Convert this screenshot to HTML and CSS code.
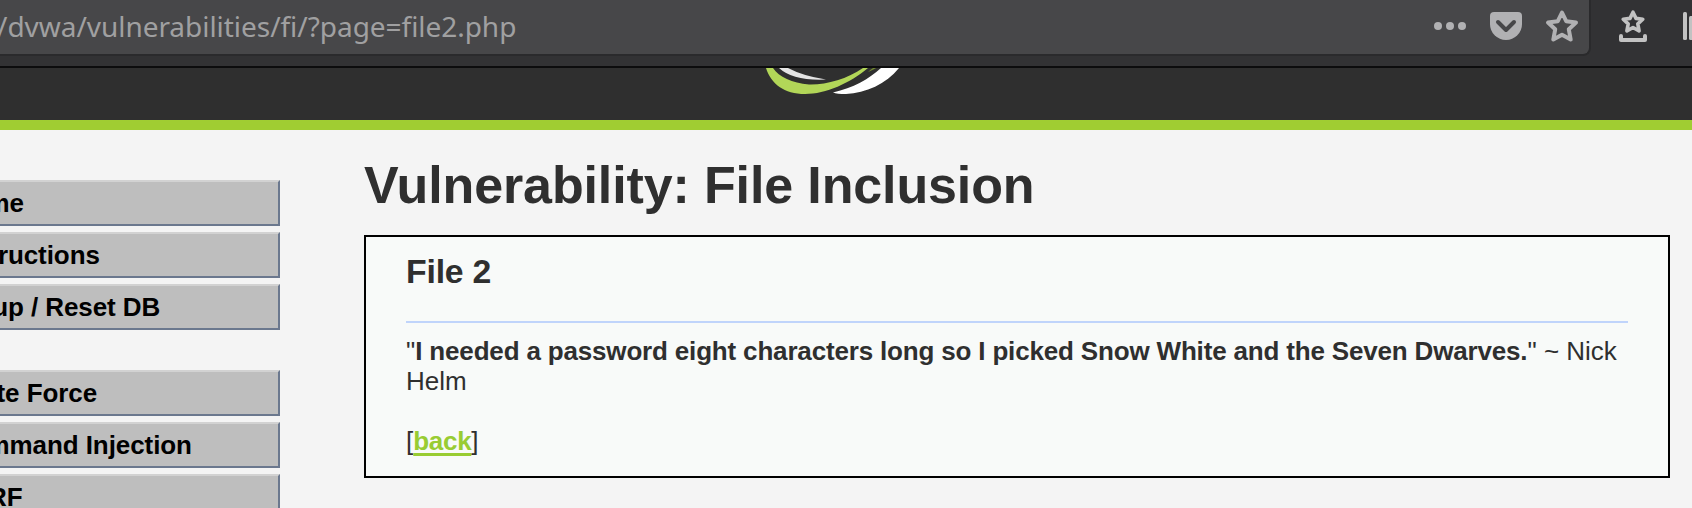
FILE: index.html
```html
<!DOCTYPE html>
<html lang="en">
<head>
<meta charset="utf-8">
<title>Vulnerability: File Inclusion</title>
<link rel="stylesheet" href="styles.css">
</head>
<body>
<div class="toolbar">
  <div class="urlbar">
    <span class="url">/dvwa/vulnerabilities/fi/?page=file2.php</span>
    <svg class="url-icons" width="152" height="54" viewBox="1430 0 152 54">
      <g fill="#b1b1b3"><circle cx="1437" cy="26" r="4"/><circle cx="1449" cy="26" r="4"/><circle cx="1461" cy="26" r="4"/>
      <path d="M1493 12h24q4 0 4 4v8a16 16 0 0 1-32 0v-8q0-4 4-4z"/></g>
      <path d="M1497 22l8 8 8-8" fill="none" stroke="#474749" stroke-width="4" stroke-linecap="round" stroke-linejoin="round"/>
      <path d="M1561 12.5l4.2 8.7 9.8 1.3-7.2 6.8 1.9 10.2-8.7-4.8-8.7 4.8 1.9-10.2-7.2-6.8 9.8-1.3z" fill="none" stroke="#b1b1b3" stroke-width="4" stroke-linejoin="round"/>
    </svg>
  </div>
  <svg class="tool-icons" width="101" height="66" viewBox="1591 0 101 66">
    <path d="M1633 12.2l3 6.2 6.8.9-5 4.6 1.3 7-6.1-3.4-6.1 3.4 1.3-7-5-4.6 6.8-.9z" fill="none" stroke="#c2c2c2" stroke-width="3.6" stroke-linejoin="round"/>
    <path d="M1621 36v4h24v-4" fill="none" stroke="#c2c2c2" stroke-width="4" stroke-linecap="round" stroke-linejoin="round"/>
    <rect x="1683" y="12" width="4" height="28" rx="1.5" fill="#c2c2c2"/><rect x="1689" y="16" width="4" height="24" rx="1.5" fill="#c2c2c2"/>
  </svg>
</div>
<header class="header">
  <svg class="logo" width="150" height="28" viewBox="760 68 150 28">
    <path d="M766 68C771 84 784 94 805 94C826 94 850 83 868 68L863 68C847 79 826 85 809 84.500C792 83 779 77 773 68Z" fill="#b2d658"/>
    <path d="M868 72Q873 70 877 67.500L874 67.500Q871 69 868 72Z" fill="#71882f"/>
    <path d="M779 68Q793 81 826 79.500Q803 76 788 68Z" fill="#e4e4e4"/>
    <path d="M881 68C869 79 853 88 833 92.500Q837 94 846 94C866 93 886 84 899 68Z" fill="#fff"/>
  </svg>
</header>
<div class="page">
  <nav class="menu">
    <ul class="group"><li>Home</li><li>Instructions</li><li>Setup / Reset DB</li></ul>
    <ul class="group"><li>Brute Force</li><li>Command Injection</li><li>CSRF</li></ul>
  </nav>
  <main class="content">
    <h1>Vulnerability: File Inclusion</h1>
    <section class="panel">
      <h2>File 2</h2>
      <hr>
      <p>"<b>I needed a password eight characters long so I picked Snow White and the Seven Dwarves.</b>" ~ Nick Helm</p>
      <p class="links">[<a href="#">back</a>]</p>
    </section>
  </main>
</div>
</body>
</html>
```
FILE: styles.css
```css
* { box-sizing: border-box; }
body {
  margin: 0;
  height: 508px;
  overflow: hidden;
  background: #f4f4f4;
  color: #2f2f2f;
  font: 26px/30px "Liberation Sans", Arial, sans-serif;
}
.toolbar {
  display: flex;
  height: 68px;
  background: #323234;
  border-bottom: 2px solid #0c0c0d;
}
.urlbar {
  display: flex;
  justify-content: space-between;
  width: 1591px;
  height: 56px;
  padding-right: 6.5px;
  background: #474749;
  border-right: 2px solid #2a2a2c;
  border-bottom: 2px solid #2a2a2c;
  border-bottom-right-radius: 8px;
}
.url {
  margin-left: -3px;
  color: #a0a0a1;
  font: 28px/52px "Noto Sans", sans-serif;
  letter-spacing: -0.04px;
  white-space: nowrap;
}
.header {
  display: flex;
  height: 62px;
  padding-left: 760px;
  background: #2f2f2f;
  border-bottom: 10px solid #a0cd32;
}
.page { display: flex; }
.menu {
  display: flex;
  flex-direction: column;
  gap: 40px;
  width: 340px;
  margin-left: -60px;
  padding-top: 50px;
}
.group {
  display: flex;
  flex-direction: column;
  gap: 6px;
  margin: 0;
  padding: 0;
  list-style: none;
}
.group li {
  height: 46px;
  padding: 6px 10px;
  background: #bebebe;
  border: 2px solid #6b788e;
  border-top-color: #d2d2d2;
  color: #000;
  font-weight: bold;
  letter-spacing: -0.08px;
}
.content {
  width: 1306px;
  margin-left: 84px;
  padding-top: 25px;
}
h1 {
  margin: 0;
  font-size: 52px;
  line-height: 60px;
  letter-spacing: -0.13px;
}
.panel {
  height: 243px;
  margin-top: 20px;
  padding: 14px 40px;
  background: #f8faf9;
  border: 2px solid #000;
}
h2 {
  margin: 0;
  font-size: 33.8px;
  line-height: 40px;
  letter-spacing: -0.2px;
}
hr {
  height: 2px;
  margin: 30px 0 13px;
  border: 0;
  background: #c0d4fb;
}
p { margin: 0; }
b { letter-spacing: -0.17px; }
.links { margin-top: 30px; }
a {
  color: #99cc33;
  font-weight: bold;
  letter-spacing: -0.3px;
  text-decoration-thickness: 3px;
  text-underline-offset: 3px;
  text-decoration-skip-ink: none;
}
```
